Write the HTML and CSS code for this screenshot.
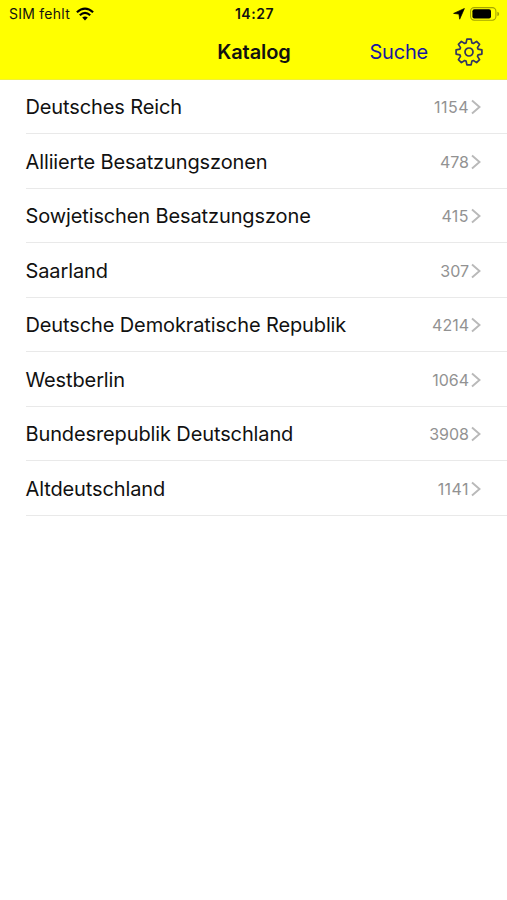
FILE: index.html
```html
<!DOCTYPE html>
<html lang="de">
<head>
<meta charset="utf-8">
<title>Katalog</title>
<link rel="stylesheet" href="styles.css">
</head>
<body>
<header class="header">
  <div class="status">
    <div class="carrier"><span>SIM fehlt</span>
      <svg class="wifi" viewBox="0 0 18 14"><path d="M9 13.5 6.2 10.6Q9 8.5 11.8 10.6Z" fill="#000"/><path d="M.9 5.3Q9-2.1 17.1 5.3M3.8 8.3Q9 3.5 14.2 8.3" fill="none" stroke="#000" stroke-width="2.2"/></svg>
    </div>
    <time class="clock">14:27</time>
    <div class="indicators">
      <svg class="location" viewBox="0 0 12 12"><path d="M11.4.5 6.7 11.2 5.9 6.1 .6 5.4Z" fill="#000" stroke="#000" stroke-width=".7" stroke-linejoin="round"/></svg>
      <svg class="battery" viewBox="0 0 30 14"><rect x=".6" y=".6" width="25.3" height="12.6" rx="3.6" fill="none" stroke="#a5a500" stroke-width="1.1"/><rect x="2.4" y="2.3" width="18.6" height="9.2" rx="2" fill="#000"/><path d="M27.3 4.7Q29.2 5.2 29.2 6.9T27.3 9.1Z" fill="#a5a500"/></svg>
    </div>
  </div>
  <nav class="navbar">
    <h1 class="title">Katalog</h1>
    <div class="actions">
      <a class="search">Suche</a>
      <svg class="gear" viewBox="-14 -14 28 28"><path d="M-2.9-9.1-2.1-12.9H2.1L2.9-9.1 4.4-8.5 7.6-10.6 10.6-7.6 8.5-4.4 9.1-2.9 12.9-2.1V2.1L9.1 2.9 8.5 4.4 10.6 7.6 7.6 10.6 4.4 8.5 2.9 9.1 2.1 12.9H-2.1L-2.9 9.1-4.4 8.5-7.6 10.6-10.6 7.6-8.5 4.4-9.1 2.9-12.9 2.1V-2.1L-9.1-2.9-8.5-4.4-10.6-7.6-7.6-10.6-4.4-8.5Z"/><circle r="4"/></svg>
    </div>
  </nav>
</header>
<main class="list">
  <div class="row"><span class="name">Deutsches Reich</span><span class="count wide">1154</span><svg class="chevron" viewBox="0 0 10 16"><path d="M1 1.5 8.5 8 1 14.5"/></svg></div>
  <div class="row"><span class="name">Alliierte Besatzungszonen</span><span class="count">478</span><svg class="chevron" viewBox="0 0 10 16"><path d="M1 1.5 8.5 8 1 14.5"/></svg></div>
  <div class="row"><span class="name">Sowjetischen Besatzungszone</span><span class="count wide">415</span><svg class="chevron" viewBox="0 0 10 16"><path d="M1 1.5 8.5 8 1 14.5"/></svg></div>
  <div class="row"><span class="name">Saarland</span><span class="count">307</span><svg class="chevron" viewBox="0 0 10 16"><path d="M1 1.5 8.5 8 1 14.5"/></svg></div>
  <div class="row"><span class="name">Deutsche Demokratische Republik</span><span class="count">4214</span><svg class="chevron" viewBox="0 0 10 16"><path d="M1 1.5 8.5 8 1 14.5"/></svg></div>
  <div class="row"><span class="name">Westberlin</span><span class="count">1064</span><svg class="chevron" viewBox="0 0 10 16"><path d="M1 1.5 8.5 8 1 14.5"/></svg></div>
  <div class="row"><span class="name">Bundesrepublik Deutschland</span><span class="count">3908</span><svg class="chevron" viewBox="0 0 10 16"><path d="M1 1.5 8.5 8 1 14.5"/></svg></div>
  <div class="row"><span class="name">Altdeutschland</span><span class="count wide">1141</span><svg class="chevron" viewBox="0 0 10 16"><path d="M1 1.5 8.5 8 1 14.5"/></svg></div>
</main>
</body>
</html>
```
FILE: styles.css
```css
* { box-sizing: border-box; }
body { margin: 0; min-height: 900px; background: #fff; color: #111; font-family: Inter, "Liberation Sans", sans-serif; }
svg { display: block; flex: none; }
.header { height: 79.5px; background: #ff0; border-bottom: 1px solid #f0f03c; }
.status { height: 27px; padding: 0 7px 0 9px; display: grid; grid-template-columns: 1fr auto 1fr; align-items: center; color: #111; }
.carrier { display: flex; align-items: center; gap: 6px; font-size: 14px; letter-spacing: .25px; }
.wifi { width: 18px; height: 14px; }
.clock { font-size: 14px; font-weight: 600; letter-spacing: .55px; }
.indicators { display: flex; justify-content: flex-end; align-items: center; gap: 5px; }
.location { width: 12px; height: 12px; }
.battery { width: 30px; height: 14px; }
.navbar { height: 50px; padding: 0 24px; display: grid; grid-template-columns: 1fr auto 1fr; align-items: center; }
.title { grid-column: 2; margin: 0; padding-left: 1px; color: #111; font-size: 20px; font-weight: 600; letter-spacing: -.08px; }
.actions { display: flex; justify-content: flex-end; align-items: center; gap: 27px; }
.search { color: #1717a0; font-size: 20px; letter-spacing: -.2px; }
.gear { width: 28px; height: 28px; fill: none; stroke: #333560; stroke-width: 1.7; stroke-linejoin: round; }
.list { padding-left: 25.5px; }
.row { height: 54.55px; padding: 1.4px 26px 0 0; display: flex; align-items: center; border-bottom: 1px solid #e9e9e9; }
.name { flex: 1; font-size: 20px; letter-spacing: -.12px; white-space: nowrap; }
.count { color: #929292; font-size: 16px; }
.wide { letter-spacing: .45px; }
.chevron { width: 10px; height: 16px; margin-left: 2px; fill: none; stroke: #b9b9b9; stroke-width: 1.9; }
```
